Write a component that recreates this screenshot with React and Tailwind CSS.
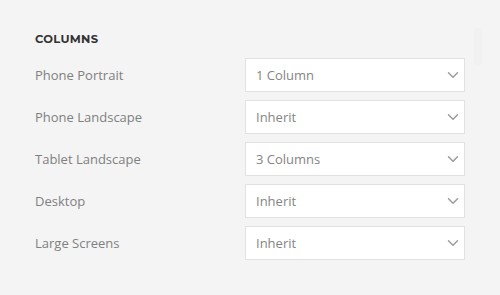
import { ChevronDown } from "lucide-react";

const rows = [
  { label: "Phone Portrait", value: "1 Column" },
  { label: "Phone Landscape", value: "Inherit" },
  { label: "Tablet Landscape", value: "3 Columns" },
  { label: "Desktop", value: "Inherit" },
  { label: "Large Screens", value: "Inherit" },
];

export default function App() {
  return (
    <div className="relative w-[500px] h-[295px] bg-[#f4f4f4] px-[35px] pt-[32px] font-['Open_Sans',sans-serif]">
      <div className="absolute right-[18px] top-[28px] w-[8px] h-[38px] bg-[#f1f1f1] rounded-sm"></div>

      <h3 className="text-[11.5px] font-bold tracking-[0.3px] text-[#333] leading-[14px] font-['Montserrat','Open_Sans',sans-serif]">
        COLUMNS
      </h3>

      <div className="mt-[12px] flex flex-col gap-[8px]">
        {rows.map((r) => (
          <div key={r.label} className="flex items-center">
            <label className="w-[210px] text-[13px] text-[#808080] pt-[1px]">{r.label}</label>
            <div className="w-[220px] h-[34px] bg-white border border-[#e2e2e2] flex items-center justify-between pl-[10px] pr-[2px]">
              <span className="text-[13px] text-[#858585] pt-[1px]">{r.value}</span>
              <ChevronDown size={18} strokeWidth={1.9} className="text-[#9a9a9a]" />
            </div>
          </div>
        ))}
      </div>
    </div>
  );
}
